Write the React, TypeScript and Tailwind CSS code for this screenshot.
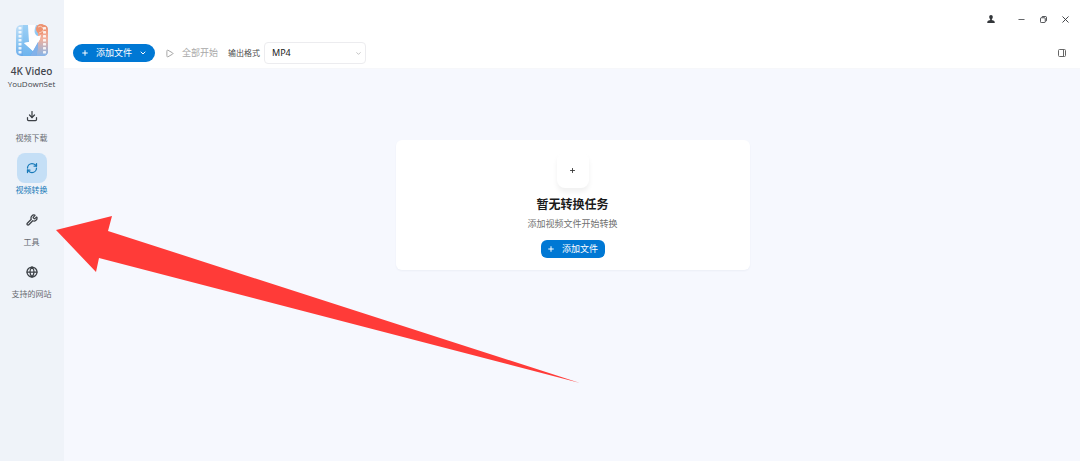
import React, { useState } from 'react';
import { ChevronDown, Download, Globe, Minus, Play, Plus, RefreshCw, Wrench, X } from 'lucide-react';

const navItems = [
  { id: 'download', label: '视频下载', icon: Download },
  { id: 'convert', label: '视频转换', icon: RefreshCw },
  { id: 'tools', label: '工具', icon: Wrench },
  { id: 'sites', label: '支持的网站', icon: Globe },
];

const filmHoles = [3, 7, 11, 15, 19, 23, 27];

const Logo: React.FC = () => (
  <svg className="w-8 h-8" viewBox="0 0 32 32" aria-hidden="true">
    <defs>
      <linearGradient id="logoBase" x1="0" y1="0" x2="0.5" y2="1">
        <stop offset="0" stopColor="#c3e0f8" />
        <stop offset="0.5" stopColor="#8cc6f2" />
        <stop offset="1" stopColor="#5b9fe8" />
      </linearGradient>
      <linearGradient id="logoRight" x1="0" y1="0" x2="0" y2="1">
        <stop offset="0" stopColor="#f08e6b" />
        <stop offset="0.45" stopColor="#f2b09c" />
        <stop offset="1" stopColor="#86b5ea" />
      </linearGradient>
      <linearGradient id="logoStrip" x1="0" y1="0" x2="0" y2="1">
        <stop offset="0" stopColor="#9dd0f5" />
        <stop offset="1" stopColor="#6db4ee" />
      </linearGradient>
    </defs>
    <rect x="0" y="1" width="32" height="31" rx="5" fill="url(#logoBase)" />
    <path d="M22 1H27Q32 1 32 6V27Q32 32 27 32H20L22 22Z" fill="url(#logoRight)" />
    <path d="M7 1H12V18L9 19L17 27L14 32H7Z" fill="url(#logoStrip)" />
    <path d="M12 1H20Q17 8 20 11Q22 13 25 11L24 15L17 27L8 19L13 18Z" fill="#fdfdff" />
    <path d="M13 18L21 12L24 15L17 27L8 19Z" fill="#ffffff" />
    <path d="M17 27L22 18V25L20 32H14Z" fill="#81b1ea" />
    <circle cx="25" cy="5" r="5" fill="#ee9271" />
    <path d="M22 3Q25 1 27 4T23 9" fill="none" stroke="#f9d0bd" />
    {filmHoles.map(y => (
      <g key={y} fill="#ffffff" opacity="0.85">
        <rect x="2.500" y={y} width="3" height="2.500" rx=".5" />
        <rect x="27" y={y} width="3" height="2.500" rx=".5" />
      </g>
    ))}
  </svg>
);

const Sidebar: React.FC = () => {
  const [active, setActive] = useState('convert');

  return (
    <aside className="w-16 shrink-0 flex flex-col items-center pt-6 pr-px bg-[#eff3f9]">
      <Logo />
      <div className="mt-[7px] text-[10px] leading-4 font-medium text-[#3f444b] font-['Noto_Sans'] whitespace-nowrap">
        4K Video
      </div>
      <div className="text-[8px] leading-[10px] text-[#3f444b] font-['Open_Sans']">YouDownSet</div>
      <nav className="mt-3 flex flex-col gap-2">
        {navItems.map(({ id, label, icon: Icon }) => (
          <button
            key={id}
            type="button"
            onClick={() => setActive(id)}
            className={`flex flex-col items-center text-[8px] leading-[14px] ${
              active === id ? 'text-[#1779b8]' : 'text-[#666a70]'
            }`}
          >
            <span
              className={`w-[30px] h-[30px] rounded-lg flex items-center justify-center ${
                active === id ? 'bg-[#c5dff6]' : 'text-[#3c4046]'
              }`}
            >
              <Icon size={12} strokeWidth={2.5} />
            </span>
            {label}
          </button>
        ))}
      </nav>
    </aside>
  );
};

const TitleBar: React.FC = () => (
  <div className="h-[38px] flex items-center justify-end pr-[5px] text-[#33363a]">
    <button type="button" aria-label="账户" className="w-6 h-6 mr-2 flex items-center justify-center">
      <svg className="w-2 h-2" viewBox="0 0 8 8" fill="currentColor">
        <path d="M4 0C2.900 0 2.200 .8 2.200 2S3 4 3.200 4.400V5L1 5.800Q.3 6.200.2 8H7.800Q7.700 6.200 7 5.800L4.800 5V4.400C5 4 5.800 3.200 5.800 2S5.100 0 4 0Z" />
      </svg>
    </button>
    <button type="button" aria-label="最小化" className="w-5 h-6 flex items-center justify-center">
      <Minus size={9} />
    </button>
    <button type="button" aria-label="还原" className="w-6 h-6 flex items-center justify-center">
      <svg className="w-[7px] h-[7px]" viewBox="0 0 8 8" fill="none" stroke="currentColor">
        <rect x=".5" y="2" width="5.500" height="5.500" rx="1" />
        <path d="M2 1.500Q2.200.5 3.200.5H6Q7.500.5 7.500 2V4.800Q7.500 5.800 6.500 6" />
      </svg>
    </button>
    <button type="button" aria-label="关闭" className="w-5 h-6 flex items-center justify-center">
      <X size={11} />
    </button>
  </div>
);

const Toolbar: React.FC = () => (
  <div className="h-[30px] flex items-center pl-[9px] pr-[14px]">
    <button
      type="button"
      className="h-[18px] w-[82px] rounded-full bg-[#0078d4] text-white text-[9px] flex items-center justify-center gap-[7px]"
    >
      <Plus size={8} strokeWidth={3} />
      添加文件
      <ChevronDown size={8} strokeWidth={3} />
    </button>
    <button type="button" disabled className="ml-[10px] flex items-center gap-2 text-[9px] text-[#a8a8a8]">
      <Play size={9} className="text-[#8a8a8a]" />
      全部开始
    </button>
    <label htmlFor="format" className="ml-[10px] text-[8px] text-[#4a4a4a]">
      输出格式
    </label>
    <div className="relative ml-1 flex items-center">
      <select
        id="format"
        defaultValue="MP4"
        className="appearance-none w-[102px] h-[22px] pl-[7px] rounded-sm border border-[#ececef] bg-white text-[9px] text-[#222222] font-['Noto_Sans']"
      >
        <option>MP4</option>
        <option>MKV</option>
        <option>MP3</option>
      </select>
      <ChevronDown size={7} className="absolute right-1 text-[#9a9a9a] pointer-events-none" />
    </div>
    <button type="button" aria-label="任务面板" className="ml-auto">
      <svg className="w-2 h-2" viewBox="0 0 8 8" fill="none" stroke="#666666">
        <rect x=".5" y=".5" width="7" height="7" rx="1" />
        <path d="M5.500 .5V7.500" />
      </svg>
    </button>
  </div>
);

const EmptyState: React.FC = () => (
  <section className="w-1/3 min-w-[354px] h-[130px] pt-3 rounded-md bg-white shadow-[0_1px_2px_rgba(30,50,90,0.05)] flex flex-col items-center">
    <div className="w-8 h-9 rounded-lg bg-white shadow-[0_4px_5px_rgba(0,0,0,0.06)] flex items-center justify-center text-[#333333]">
      <Plus size={7} strokeWidth={3} />
    </div>
    <h1 className="mt-2 text-[12px] leading-[18px] font-bold text-[#1b1b1b]">暂无转换任务</h1>
    <p className="mt-[3px] text-[9px] leading-[14px] text-[#717171]">添加视频文件开始转换</p>
    <button
      type="button"
      className="mt-[9px] h-[18px] w-16 rounded-md bg-[#0078d4] text-white text-[9px] flex items-center justify-center gap-[7px]"
    >
      <Plus size={8} strokeWidth={3} />
      添加文件
    </button>
  </section>
);

const App: React.FC = () => {
  return (
    <div className="relative min-h-screen flex bg-[#f6f8fe] font-['Noto_Sans','Noto_Sans_CJK_SC',sans-serif]">
      <Sidebar />
      <div className="flex-1 flex flex-col">
        <header className="bg-white border-b border-[#f6f7fa]">
          <TitleBar />
          <Toolbar />
        </header>
        <main className="flex-1 flex justify-center items-start pt-[71px] pl-px">
          <EmptyState />
        </main>
      </div>

      {/* Pointer to the tools entry */}
      <svg
        className="absolute left-14 top-[215px] w-[524px] h-[169px] pointer-events-none"
        viewBox="0 0 524 169"
        aria-hidden="true"
      >
        <path d="M0 15L56 1L52 16L524 168L43 43L40 57Z" fill="#ff3b38" />
      </svg>
    </div>
  );
};

export default App;
